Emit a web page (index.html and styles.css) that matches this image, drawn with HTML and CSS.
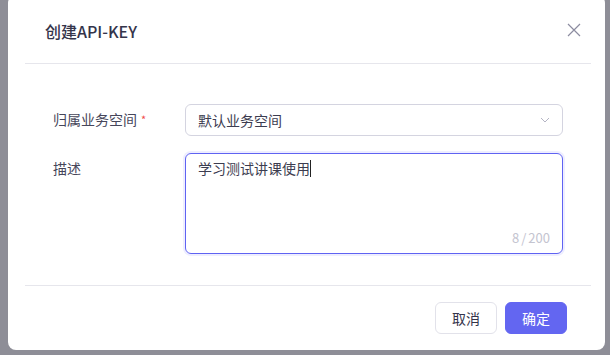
FILE: index.html
```html
<!DOCTYPE html>
<html lang="zh">
<head>
    <meta charset="UTF-8">
    <title>创建API-KEY</title>
    <link rel="stylesheet" href="styles.css">
</head>
<body>
<div class="modal">
    <div class="modal_head">
        <div class="modal_title">创建API-KEY</div>
        <svg class="modal_close" width="14" height="14" viewBox="0 0 14 14">
            <path d="M1 1L13 13M13 1L1 13" stroke="#8c8ca0" stroke-width="1.2" fill="none"/>
        </svg>
    </div>
    <div class="modal_line"></div>
    <div class="modal_body">
        <div class="form_row">
            <div class="form_label">归属业务空间<span class="req">*</span></div>
            <div class="form_select">
                <span>默认业务空间</span>
                <svg width="10" height="6" viewBox="0 0 10 6">
                    <path d="M1 1L5 5L9 1" stroke="#b4b4c4" stroke-width="1" fill="none"/>
                </svg>
            </div>
        </div>
        <div class="form_row">
            <div class="form_label">描述</div>
            <div class="form_textarea">
                <div class="ta_text">学习测试讲课使用<span class="caret"></span></div>
                <div class="ta_count">8<span class="slash">/</span>200</div>
            </div>
        </div>
    </div>
    <div class="modal_line"></div>
    <div class="modal_foot">
        <button class="btn">取消</button>
        <button class="btn btn_primary">确定</button>
    </div>
</div>
</body>
</html>
```

FILE: styles.css
```css
body {
    margin: 0;
    background: #8e8e97;
    font-family: "Noto Sans CJK SC", "Noto Sans", sans-serif;
    overflow: hidden;
}

.modal {
    margin: -5px 0 0 8px;
    width: 597px;
    height: 355px;
    background: #fff;
    border-radius: 8px;
    box-sizing: border-box;
    display: flex;
    flex-direction: column;
}

.modal_head {
    height: 68px;
    padding: 0 24px 0 37px;
    display: flex;
    align-items: center;
    justify-content: space-between;
    box-sizing: border-box;
}

.modal_title {
    font-size: 16px;
    font-weight: 500;
    color: #34344a;
    padding-top: 4px;
}

.modal_close {
    margin-top: 2px;
}

.modal_line {
    height: 1px;
    background: #e6e6ec;
    margin: 0 14px 0 17px;
}

.modal_body {
    padding: 40px 42px 31px 45px;
    display: flex;
    flex-direction: column;
    gap: 17px;
}

.form_row {
    display: flex;
    align-items: flex-start;
}

.form_label {
    width: 132px;
    flex-shrink: 0;
    font-size: 14px;
    color: #46465a;
    line-height: 31px;
}

.req {
    color: #f04b4b;
    font-size: 11px;
    margin-left: 4px;
    vertical-align: top;
}

.form_select {
    flex: 1;
    height: 32px;
    border: 1px solid #d4d4e0;
    border-radius: 6px;
    box-sizing: border-box;
    padding: 0 12px 1px 12px;
    display: flex;
    align-items: center;
    justify-content: space-between;
    font-size: 14px;
    color: #3c3c50;
}

.form_textarea {
    flex: 1;
    height: 101px;
    border: 1px solid #5f63f2;
    border-radius: 6px;
    box-shadow: 0 0 0 2px #eeeeff;
    box-sizing: border-box;
    padding: 3px 12px 6px 12px;
    display: flex;
    flex-direction: column;
    justify-content: space-between;
}

.ta_text {
    font-size: 14px;
    color: #3c3c50;
    line-height: 22px;
}

.caret {
    display: inline-block;
    width: 1px;
    height: 17px;
    background: #222;
    vertical-align: -3px;
}

.ta_count {
    text-align: right;
    font-size: 13px;
    color: #c4c4d0;
    line-height: 18px;
}

.slash {
    margin: 0 2px;
}

.modal_foot {
    padding: 16px 38px 0 0;
    display: flex;
    justify-content: flex-end;
    gap: 8px;
}

.btn {
    width: 62px;
    height: 32px;
    border: 1px solid #e2e2ea;
    border-radius: 6px;
    background: #fff;
    font-family: inherit;
    font-size: 14px;
    color: #34344a;
}

.btn_primary {
    background: #6366f1;
    border-color: #6366f1;
    color: #fff;
}
```
